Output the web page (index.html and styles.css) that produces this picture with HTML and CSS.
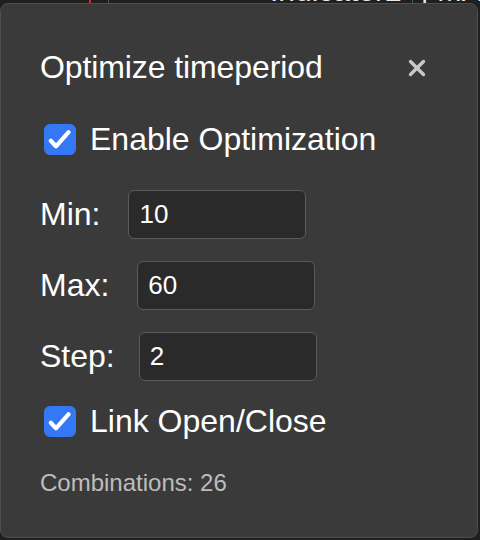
FILE: index.html
```html
<!DOCTYPE html>
<html lang="en">
<head>
<meta charset="utf-8">
<title>Optimize timeperiod</title>
<link rel="stylesheet" href="styles.css">
</head>
<body>
<div class="chart-head">
  <span class="mark-red"></span>
  <span class="vsep"></span>
  <span class="ind">Indicator2</span>
  <span class="vsep vsep-2"></span>
  <span class="ind ind-2">| MA</span>
</div>
<div class="dialog" role="dialog" aria-label="Optimize timeperiod">
  <div class="title-row">
    <h2 class="title">Optimize timeperiod</h2>
    <button class="close" aria-label="Close">
      <svg width="18" height="18" viewBox="0 0 18 18"><path d="M2.5 2.5 L15.5 15.5 M15.5 2.5 L2.5 15.5" stroke="#c8c8c8" stroke-width="3.4" stroke-linecap="round" fill="none"/></svg>
    </button>
  </div>
  <label class="check-row check-first">
    <span class="check"><svg width="32" height="31" viewBox="0 0 32 31"><path d="M6.8 16.8 L12 22.3 L24.6 8.2" stroke="#fff" stroke-width="4.2" stroke-linecap="round" stroke-linejoin="round" fill="none"/></svg></span>
    <span class="check-text">Enable Optimization</span>
  </label>
  <div class="field field-first">
    <span class="field-label">Min:</span>
    <input class="field-input" type="text" value="10">
  </div>
  <div class="field">
    <span class="field-label">Max:</span>
    <input class="field-input" type="text" value="60">
  </div>
  <div class="field field-step">
    <span class="field-label">Step:</span>
    <input class="field-input" type="text" value="2">
  </div>
  <label class="check-row check-second">
    <span class="check"><svg width="32" height="31" viewBox="0 0 32 31"><path d="M6.8 16.8 L12 22.3 L24.6 8.2" stroke="#fff" stroke-width="4.2" stroke-linecap="round" stroke-linejoin="round" fill="none"/></svg></span>
    <span class="check-text">Link Open/Close</span>
  </label>
  <p class="combos">Combinations: 26</p>
</div>
</body>
</html>
```

FILE: styles.css
```css
html, body {
  margin: 0;
  padding: 0;
}
body {
  width: 480px;
  height: 540px;
  overflow: hidden;
  position: relative;
  background: #1f1f1f;
  font-family: "Liberation Sans", Arial, Helvetica, sans-serif;
  color: #fff;
}
.chart-head {
  height: 3px;
  overflow: hidden;
  display: flex;
  align-items: flex-end;
  padding-left: 89px;
}
.mark-red {
  width: 2px;
  height: 3px;
  background: #d42a2a;
  flex: none;
}
.vsep {
  width: 1px;
  height: 3px;
  background: #555;
  margin-left: 17px;
  flex: none;
}
.ind {
  font-size: 30px;
  line-height: 24px;
  color: #eaeaea;
  margin-left: 161px;
  white-space: nowrap;
  flex: none;
}
.vsep-2 {
  margin-left: 10px;
}
.ind-2 {
  margin-left: 8px;
}
.dialog {
  position: absolute;
  left: 0;
  top: 3px;
  width: 478px;
  height: 535px;
  box-sizing: border-box;
  border: 1px solid #4e4e4e;
  border-radius: 8px;
  background: #3a3a3a;
  padding: 45px 40px 0 39px;
}
.title-row {
  display: flex;
  justify-content: space-between;
  align-items: center;
  height: 37px;
}
.title {
  margin: 0;
  font-size: 32px;
  font-weight: normal;
  line-height: 37px;
  color: #fff;
  letter-spacing: -0.1px;
}
.close {
  border: 0;
  background: none;
  padding: 0;
  margin: 0 11px 0 0;
  width: 18px;
  height: 18px;
  display: flex;
}
.check-row {
  display: flex;
  align-items: center;
  gap: 14px;
  height: 37px;
}
.check-first {
  margin-top: 35px;
}
.check-second {
  margin-top: 22px;
}
.check {
  width: 32px;
  height: 31px;
  margin-left: 4px;
  border-radius: 6px;
  background: #3478f6;
  display: flex;
  flex: none;
}
.check-text {
  font-size: 32px;
  line-height: 37px;
}
.field {
  display: flex;
  align-items: center;
  gap: 28px;
  margin-top: 22px;
}
.field-first {
  margin-top: 32px;
}
.field-step {
  gap: 24px;
}
.field-label {
  font-size: 32px;
  line-height: 37px;
}
.field-input {
  width: 178px;
  height: 49px;
  box-sizing: border-box;
  border: 1px solid #5a5a5a;
  border-radius: 6px;
  background: #2a2a2a;
  color: #fff;
  font-family: "Liberation Sans", Arial, Helvetica, sans-serif;
  font-size: 26px;
  padding: 0 10px;
  margin: 0;
  outline: none;
}
.combos {
  margin: 29px 0 0;
  font-size: 24px;
  line-height: 27px;
  color: #bdbdbd;
}
```
